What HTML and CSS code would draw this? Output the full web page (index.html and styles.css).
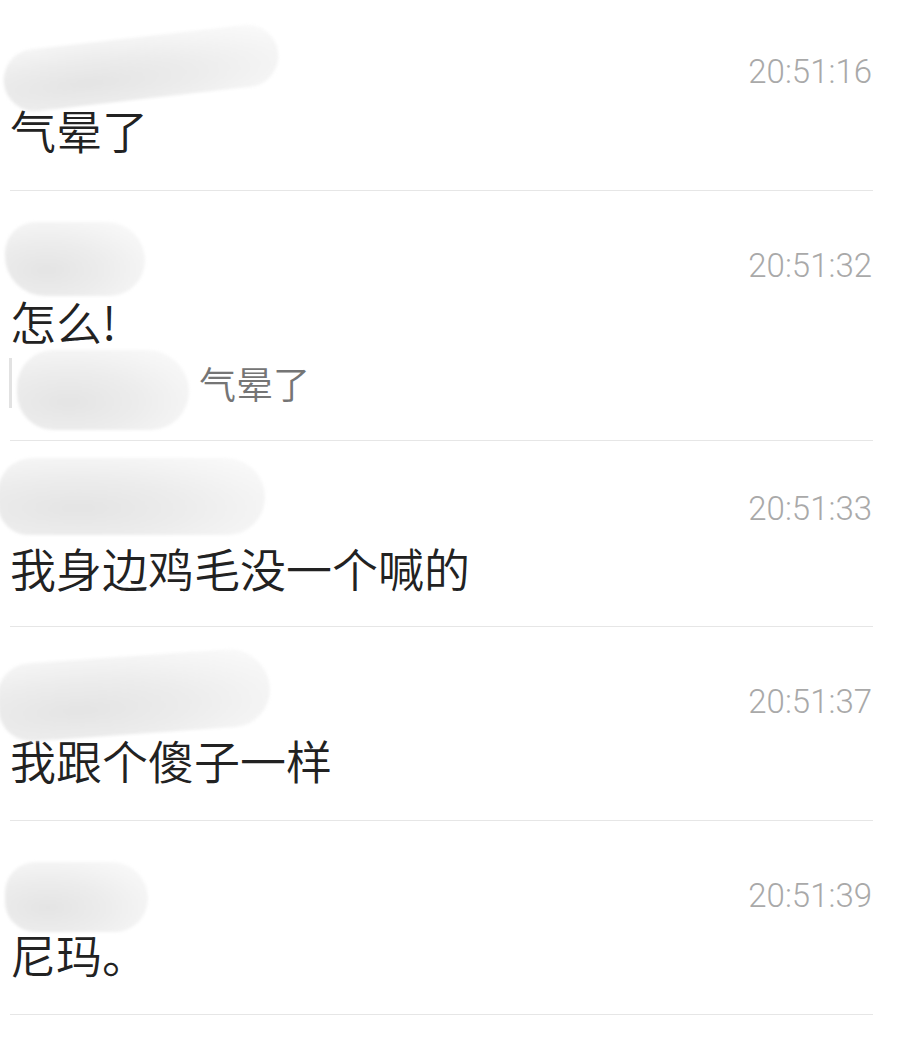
FILE: index.html
```html
<!DOCTYPE html>
<html lang="zh-CN">
<head>
  <meta charset="UTF-8" />
  <meta name="viewport" content="width=device-width, initial-scale=1.0"/>
  <title>聊天记录</title>
  <link rel="stylesheet" href="styles.css">
</head>
<body>
  <div class="list">

    <div class="msg msg--first">
      <div class="msg-head">
        <span class="mask mask--1"></span>
        <span class="time">20:51:16</span>
      </div>
      <div class="msg-text">气晕了</div>
    </div>

    <div class="msg msg--reply">
      <div class="msg-head msg-head--short">
        <span class="mask mask--2"></span>
        <span class="time">20:51:32</span>
      </div>
      <div class="msg-text">怎么!</div>
      <div class="quote">
        <span class="quote-bar"></span>
        <span class="quote-name"><span class="mask mask--quote"></span></span>
        <span class="quote-text">气晕了</span>
      </div>
    </div>

    <div class="msg msg--compact">
      <div class="msg-head">
        <span class="mask mask--3"></span>
        <span class="time">20:51:33</span>
      </div>
      <div class="msg-text">我身边鸡毛没一个喊的</div>
    </div>

    <div class="msg">
      <div class="msg-head">
        <span class="mask mask--4"></span>
        <span class="time">20:51:37</span>
      </div>
      <div class="msg-text">我跟个傻子一样</div>
    </div>

    <div class="msg">
      <div class="msg-head">
        <span class="mask mask--5"></span>
        <span class="time">20:51:39</span>
      </div>
      <div class="msg-text">尼玛。</div>
    </div>

  </div>
</body>
</html>
```

FILE: styles.css
```css
:root {
  --text: #222;
  --muted: #a9a9a9;
  --quote: #757575;
  --line: #e6e6e6;
}

* {
  box-sizing: border-box;
}

body {
  margin: 0;
  background: #fff;
  font-family: "Noto Sans CJK SC", "Noto Sans", sans-serif;
  color: var(--text);
  overflow: hidden;
}

.list {
  width: 873px;
  padding-left: 10px;
}

.msg {
  padding: 55px 0 33px;
  border-bottom: 1px solid var(--line);
}

.msg--first {
  padding-top: 52px;
}

.msg--reply {
  padding-bottom: 30px;
}

.msg--compact {
  padding-top: 48px;
  padding-bottom: 31px;
}

.msg-head {
  position: relative;
  height: 49px;
  display: flex;
  justify-content: flex-end;
  align-items: flex-start;
}

.msg-head--short {
  height: 46px;
}

.msg--compact .msg-head {
  height: 50px;
}

.time {
  font-family: Roboto, "Liberation Sans", sans-serif;
  font-weight: 300;
  font-size: 33px;
  line-height: 40px;
  color: var(--muted);
  margin-right: 1px;
}

.msg-text {
  font-size: 46px;
  font-weight: 350;
  line-height: 56px;
  white-space: nowrap;
}

.quote {
  display: flex;
  align-items: center;
  height: 54px;
  margin-top: 8px;
}

.quote-bar {
  width: 3px;
  height: 50px;
  margin-left: -1px;
  background: #e2e2e2;
}

.quote-name {
  position: relative;
  width: 176px;
  height: 50px;
}

.quote-text {
  margin-left: 11px;
  font-size: 37px;
  font-weight: 350;
  line-height: 44px;
  color: var(--quote);
}

/* blurred-out names */
.mask {
  position: absolute;
  border-radius: 999px;
  background: radial-gradient(ellipse at 30% 65%, #e4e4e4 0%, #ececec 40%, #f4f4f4 70%, #fbfbfb 100%);
  filter: blur(1.5px);
}

.mask--1 {
  left: -7px;
  top: -15px;
  width: 276px;
  height: 62px;
  transform: rotate(-6.5deg);
}

.mask--2 {
  left: -5px;
  top: -24px;
  width: 140px;
  height: 74px;
  border-radius: 40px 50px 46px 52px;
}

.mask--quote {
  left: 5px;
  top: -8px;
  width: 172px;
  height: 80px;
  border-radius: 44px 50px 46px 44px;
}

.mask--3 {
  left: -12px;
  top: -31px;
  width: 267px;
  height: 77px;
  border-radius: 40px 46px 44px 36px;
}

.mask--4 {
  left: -12px;
  top: -26px;
  width: 272px;
  height: 78px;
  transform: rotate(-4deg);
  border-radius: 40px 50px 46px 40px;
}

.mask--5 {
  left: -5px;
  top: -14px;
  width: 143px;
  height: 70px;
  border-radius: 40px 48px 44px 40px;
}
```
